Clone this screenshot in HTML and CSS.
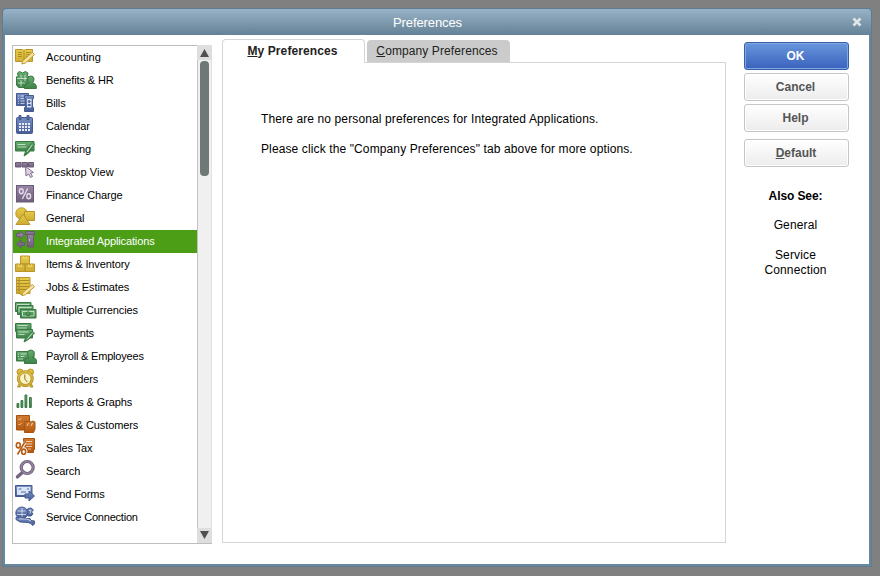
FILE: index.html
```html
<!DOCTYPE html>
<html lang="en">
<head>
<meta charset="utf-8">
<title>Preferences</title>
<link rel="stylesheet" href="styles.css">
</head>
<body>
<svg class="defs" width="0" height="0" aria-hidden="true">
  <defs>
    <linearGradient id="gold" x2="0" y2="1"><stop stop-color="#e6cb4a"/><stop offset="1" stop-color="#cfac30"/></linearGradient>
    <linearGradient id="green" x2="0" y2="1"><stop stop-color="#68ad70"/><stop offset="1" stop-color="#3d8247"/></linearGradient>
    <linearGradient id="blue" x2="0" y2="1"><stop stop-color="#7a90c4"/><stop offset="1" stop-color="#455c96"/></linearGradient>
    <linearGradient id="purple" x2="0" y2="1"><stop stop-color="#9787a5"/><stop offset="1" stop-color="#6f5f7d"/></linearGradient>
    <linearGradient id="orange" x2="0" y2="1"><stop stop-color="#d07a30"/><stop offset="1" stop-color="#b3590f"/></linearGradient>
  </defs>
</svg>
<div class="window">
  <header class="titlebar"><span class="title">Preferences</span>
    <svg class="close" viewBox="0 0 10 10"><path d="M1.500 1.500l7 7M8.500 1.500l-7 7"/></svg>
  </header>
  <main class="content">
    <nav class="sidebar">
      <ul class="list">
        <li><svg class="gold" viewBox="0 0 22 23"><path d="M1.500 3.500h7l1.500 1 1.500-1h7v12h-7l-1.500 1-1.500-1h-7z"/><path class="line" d="M10 5v10M4 6.500h4M4 8.500h4M4 10.500h4M12 6.500h4.500M12 8.500h4.500M12 10.500h3"/><path class="pencil" d="M18.300 6.300l2.200 2.200-9 8.500-3.700 1 .8-3z"/></svg><span class="wide">Accounting</span></li>
        <li><svg class="green" viewBox="0 0 22 23"><path d="M2.500 8l1.500-1.500-.5-2.500 2-1.500 3 1.500 3-1.500 2.500 1.500-.500 2.500 1.500 1.500v10.500H4.500L2.500 16z"/><path class="light" d="M3 9.500h10M7 6v3M7 11v6.500M11 6v6M4 14h7"/><path d="M10.500 19.500v-2.500q0-2 4.500-3-1.500-1.500-1.500-4 0-3 3.200-3t3.300 3q0 2.500-1.500 4 3.800 1 3.800 3v2.500z"/></svg><span>Benefits &amp; HR</span></li>
        <li><svg class="blue" viewBox="0 0 22 23"><path d="M2.500 1.500h12v12h-12z"/><path class="light" d="M4 4h1M6.500 4h6M4 6.500h1M6.500 6.500h4M4 9h1M6.500 9h4M4 11.500h1M6.500 11.500h4"/><path d="M10.500 3.500h9v3h-1v9h1v4h-9v-4h1v-9h-1z"/><path class="inner" d="M13 7h4.500v8.500h-4.500z"/><circle cx="15.200" cy="9.500" r="1"/><path d="M14.200 14v-1.500h2v1.500"/></svg><span>Bills</span></li>
        <li><svg class="blue" viewBox="0 0 22 23"><rect x="2.500" y="2.500" width="16" height="16" rx="1"/><path class="dots" d="M5 9h12M5 12h12M5 15h12"/><path d="M5 .5h2v4h-2zM13 .5h2v4h-2z"/></svg><span>Calendar</span></li>
        <li><svg class="green" viewBox="0 0 22 23"><path d="M1.500 3.500h18.500v9.500h-18.500z"/><path class="light" d="M3.500 6.500h8M3.500 9h9"/><path d="M18.500 4.500l2 1.500-6 9-4.500 3 1.700-5z"/><path class="light" d="M18 7l-5 7"/></svg><span>Checking</span></li>
        <li><svg class="purple" viewBox="0 0 22 23"><path d="M1.500 1.500h5.500v4.500h-5.500zM8 1.500h5.500v4.500h-5.500zM14.500 1.500h5v4.500h-5z"/><path class="cursor" d="M11.500 5.500l8 6-3 .500 2 3.500-2 1-2-3.500-2.500 2z"/></svg><span class="wide">Desktop View</span></li>
        <li><svg class="purple" viewBox="0 0 22 23"><rect x="2.500" y="1.500" width="17" height="16.500"/><g class="light percent"><ellipse cx="7.300" cy="7.300" rx="1.900" ry="2.500"/><ellipse cx="14.700" cy="12.200" rx="1.900" ry="2.500"/><path d="M13.700 4.500L8.300 15"/></g></svg><span>Finance Charge</span></li>
        <li><svg class="gold" viewBox="0 0 22 23"><circle cx="7.500" cy="6.500" r="5.700"/><path d="M10.500 4.500h10v9h-10z"/><path d="M9 7l7 10.500h-14z"/></svg><span>General</span></li>
        <li class="selected"><svg class="purple" viewBox="0 0 22 23"><path d="M2.500 3.500h3.500v-2.500l4.500 4-4.500 4v-2.500h-3.500zM10.500 12.500H7V10l-4.500 4L7 18v-2.500h3.500z"/><path d="M11.500 1.500h9v3h-9z"/><path d="M13.500 4.500h6v12.500h-6z"/><path class="light" d="M15.500 9v2"/></svg><span>Integrated Applications</span></li>
        <li><svg class="gold" viewBox="0 0 22 23"><path d="M6.500 3h9v8h-9zM1.500 11h9.500v7.500h-9.500zM11 11h9.500v7.500h-9.500z"/><path class="shine" d="M9.500 3.500v2h3v-2M4.500 11.500v2h3v-2M14.500 11.500v2h3v-2"/></svg><span>Items &amp; Inventory</span></li>
        <li><svg class="gold" viewBox="0 0 22 23"><path d="M2.500 1.500h13.500v16h-8l-1 1.500-1-1.500h-3.500z"/><path class="line" d="M3 4.500h12.500M3 7.500h12.500M3 10.500h12.500M3 13.500h9M5 2v15"/><path class="pencil" d="M18.300 8.500l2.200 2.200-9 8-3.700 1 .8-3z"/></svg><span>Jobs &amp; Estimates</span></li>
        <li><svg class="green" viewBox="0 0 22 23"><path d="M1.500 3.500h15.500v9h-15.500z"/><path class="light" d="M3 5.500h12.500M3 5.500v5"/><path d="M3.500 6.500h15.500v9h-15.500z"/><path class="light" d="M5 8.500h12.500M5 8.500v5"/><path d="M6.500 10.500h15.500v8.500h-15.500z"/><path class="light" d="M8.500 12.500h11.500v4.500h-11.500z"/><circle cx="14.200" cy="14.800" r="2"/></svg><span>Multiple Currencies</span></li>
        <li><svg class="green" viewBox="0 0 22 23"><path d="M1.500 1.500h15.500v8h-15.500z"/><path class="light" d="M3.500 3.500h10M3.500 6h9"/><path d="M2.500 7.500h16v8.500h-16z"/><path class="light" d="M4.500 10h10M4.500 12.500h6"/><path d="M18.500 9.500l2 1.500-6 6.500-4.500 2.500 1.700-4.500z"/><path class="light" d="M18 11.500l-5 6"/></svg><span>Payments</span></li>
        <li><svg class="green" viewBox="0 0 22 23"><path d="M2.500 6.500h17.500v9.500h-17.500z"/><path class="light" d="M4 9h1M6.500 9h6M4 11.500h1M6.500 11.500h4M4 14h5"/><path d="M10.500 18.500v-3q0-2 4.500-3-1.500-1.500-1.500-4 0-3.500 3.300-3.500t3.300 3.500q0 2.500-1.500 4 3.900 1 3.900 3v3z"/></svg><span class="tight">Payroll &amp; Employees</span></li>
        <li><svg class="gold" viewBox="0 0 22 23"><circle cx="6" cy="4" r="3"/><circle cx="16.500" cy="4" r="3"/><path d="M5 16l-1.500 3h3zM17.500 16l1.500 3h-3z"/><circle cx="11.300" cy="10.700" r="8"/><circle class="face" cx="11.300" cy="10.700" r="5.800"/><path class="hands" d="M10.800 6.500v4.500l2.500 3"/></svg><span>Reminders</span></li>
        <li><svg class="green" viewBox="0 0 22 23"><path d="M3 12.500h1.800v4h-1.800zM7 9.500h1.800v7h-1.800zM11 4h1.800v12.500h-1.800zM15.500 6.500h1.800v10h-1.800z"/></svg><span>Reports &amp; Graphs</span></li>
        <li><svg class="orange" viewBox="0 0 22 23"><path d="M2.500 1.500h13v14.500h-13z"/><path class="light" d="M4.500 5l1 1 2-2M4.500 10l1 1 2-2"/><path d="M11 7l2 1 2-1 2 1 2-1 2 1v7l-1.500 3.500h-9z"/><path class="light" d="M13 12l1.500-3M17 12l1.500-3"/></svg><span>Sales &amp; Customers</span></li>
        <li><svg class="orange" viewBox="0 0 22 23"><path d="M9.500 1.500h11v11h-1v3h-9.500z"/><path class="light" d="M12 4.500h6M12 7h6M12 9.500h6M14 12h3"/><g class="halo"><ellipse cx="4.300" cy="8.300" rx="2" ry="2.600"/><ellipse cx="9.700" cy="14.700" rx="2" ry="2.600"/><path d="M10.500 5.500L3.500 17.500"/></g><g class="tax"><ellipse cx="4.300" cy="8.300" rx="2" ry="2.600"/><ellipse cx="9.700" cy="14.700" rx="2" ry="2.600"/><path d="M10.500 5.500L3.500 17.500"/></g></svg><span>Sales Tax</span></li>
        <li><svg class="search" viewBox="0 0 22 23"><path class="h1" d="M9 12L3.500 16.800"/><circle class="c1" cx="13.200" cy="7.500" r="6"/><circle class="c2" cx="13.200" cy="7.500" r="6"/></svg><span>Search</span></li>
        <li><svg class="blue" viewBox="0 0 22 23"><path d="M1.500 2.500h16.500v11h-16.500z"/><path class="inner" d="M3 4h13.500v8h-13.500z"/><path class="mark" d="M4.500 6h3M7 9h5M13 6h2"/><path d="M11 11h4v-3l5.500 5-5.500 5v-3h-4z"/></svg><span>Send Forms</span></li>
        <li><svg class="blue" viewBox="0 0 22 23"><circle cx="7.800" cy="7" r="6"/><path class="light" d="M3.500 5h8M3 8.500h9M8 2v9"/><path d="M14 2.500l3-.5 2.500 2-2 2 1.500 2-2 2h-3l-1-2 2-1.500-2-2z"/><path d="M2 11.500l5-.5 3 1.500h6l1 2 3.500.5v3l-2 1.500-1.500-2-3-1-8-.5-4-2.500z"/><path class="light" d="M15 4.500h2l-1 3M5 13h8l4 2"/></svg><span class="tight">Service Connection</span></li>
      </ul>
      <div class="scrollbar">
        <div class="arrow"><svg viewBox="0 0 9 8"><path d="M4.500 0L9 8H0z"/></svg></div>
        <div class="track"><div class="thumb"></div></div>
        <div class="arrow down"><svg viewBox="0 0 9 8"><path d="M0 0h9L4.500 8z"/></svg></div>
      </div>
    </nav>
    <section class="panel">
      <div class="tabs">
        <div class="tab active"><span><u>M</u>y Preferences</span></div>
        <div class="tab inactive"><span><u>C</u>ompany Preferences</span></div>
      </div>
      <div class="page">
        <p>There are no personal preferences for Integrated Applications.</p>
        <p>Please click the "Company Preferences" tab above for more options.</p>
      </div>
    </section>
    <aside class="actions">
      <button class="primary">OK</button>
      <button>Cancel</button>
      <button>Help</button>
      <button class="default"><span><u>D</u>efault</span></button>
      <h2>Also See:</h2>
      <p>General</p>
      <p>Service<br>Connection</p>
    </aside>
  </main>
</div>
</body>
</html>
```
FILE: styles.css
```css
* { box-sizing: border-box; }
body {
  margin: 0;
  height: 576px;
  padding: 8px 8px 9px 2px;
  overflow: hidden;
  background: #808080;
  font: 12px/15px "Liberation Sans", Arial, sans-serif;
  color: #000;
}
.defs { display: block; }
.window {
  height: 559px;
  display: flex;
  flex-direction: column;
  background: #6a889c;
  border: solid #5f7d92;
  border-width: 0 1px 1px;
  border-radius: 4px 4px 0 0;
}
.titlebar {
  height: 27px;
  flex: none;
  display: flex;
  align-items: center;
  justify-content: center;
  padding: 0 9px 0 20px;
  background: linear-gradient(#98b3c7, #658196);
  border-top: 1px solid #5e7c91;
  border-radius: 4px 4px 0 0;
  color: #fff;
  font-size: 13px;
}
.title { flex: 1; text-align: center; letter-spacing: -.1px; padding-right: 20px; }
.close { width: 10px; height: 10px; }
.close path { stroke: #e2e5e7; stroke-width: 2.6; }
.content {
  flex: 1;
  margin: 0 2px 2px;
  background: #fff;
  display: flex;
  min-height: 0;
}
.sidebar {
  display: flex;
  width: 200px;
  height: 499px;
  margin: 10px 0 0 7px;
}
.list {
  list-style: none;
  margin: 0;
  padding: 0;
  width: 185px;
  border: 1px solid #bdbdbd;
  border-right: 0;
  font-size: 11px;
  letter-spacing: -.12px;
}
.list li { height: 23px; display: flex; align-items: center; padding-left: 1px; }
.list li span { margin-left: 10px; white-space: nowrap; }
.list .wide { letter-spacing: .05px; }
.list .tight { letter-spacing: -.2px; }
.list svg { width: 22px; height: 23px; flex: none; overflow: visible; }
.selected { background: #4c9e17; color: #fff; }
.gold { fill: url(#gold); stroke: #b8942a; }
.green { fill: url(#green); stroke: #3a7843; }
.blue { fill: url(#blue); stroke: #455b90; }
.purple { fill: url(#purple); stroke: #6a5a77; }
.orange { fill: url(#orange); stroke: #a6530f; }
.list .light, .list .line, .list .shine { fill: none; stroke-width: 1; }
.light { stroke: #ffffffa0; }
.line { stroke: #ae8d28; }
.shine { stroke: #eed770; }
.pencil { fill: #f5e3a0; stroke: #c09a34; }
.cursor { fill: #ded3e6; stroke: #7f6f8d; }
.list .percent { stroke: #e4dcea; stroke-width: 1.4; }
.dots { fill: none; stroke: #e8edf8; stroke-width: 1.8; stroke-dasharray: 2 1; }
.face { fill: #fbf3c5; }
.hands { fill: none; stroke: #8c7028; }
.halo { fill: #fff; stroke: #fff; stroke-width: 3.5; }
.tax { fill: none; stroke: #b65b14; stroke-width: 1.6; }
.search { fill: none; }
.h1 { stroke: #75667f; stroke-width: 3.5; stroke-linecap: round; }
.c1 { stroke: #6f607c; stroke-width: 3.2; }
.c2 { stroke: #9a8ba7; stroke-width: 1.2; }
.inner { fill: #dce5f5; stroke: none; }
.mark { stroke: #5570ab; }
.scrollbar { width: 15px; display: flex; flex-direction: column; border-bottom: 1px solid #bdbdbd; }
.arrow { height: 15px; flex: none; background: #dedede; display: grid; place-items: center; }
.down { padding-bottom: 2px; }
.arrow svg { width: 9px; height: 8px; fill: #505050; display: block; }
.track { flex: 1; background: #f0f0f0; border-left: 1px solid #c2c2c2; border-right: 1px solid #e2e2e2; padding: 1px 2px 0; }
.thumb { width: 9px; height: 115px; border-radius: 4px; background: #707777; }
.panel { width: 504px; height: 504px; margin: 4px 0 0 10px; display: flex; flex-direction: column; }
.tabs { height: 24px; display: flex; z-index: 1; margin-bottom: -1px; }
.tab { text-align: center; white-space: nowrap; color: #222; letter-spacing: .1px; }
.active { width: 143px; background: #fff; border: 1px solid #d5d5d5; border-bottom: 0; border-radius: 4px 4px 0 0; font-weight: bold; padding: 4px 2px 0 0; }
.inactive { width: 143px; height: 22px; margin: 1px 0 0 2px; border-radius: 4px 4px 0 0; background: #cbcbcb; padding: 4px 3px 0 0; }
.page { flex: 1; border: 1px solid #d5d5d5; padding: 49px 0 0 38px; letter-spacing: .118px; }
.page p { margin: 0 0 15px; white-space: nowrap; }
.actions { width: 105px; margin: 7px 0 0 18px; display: flex; flex-direction: column; text-align: center; }
button {
  height: 28px;
  margin: 0 0 3px;
  padding: 0 2px 0 0;
  border: 1px solid #c6c6c6;
  border-radius: 3px;
  background: linear-gradient(#fff, #ececec);
  box-shadow: inset 0 0 0 1px #fff;
  color: #555;
  font: bold 12px "Liberation Sans", Arial, sans-serif;
}
.primary { background: linear-gradient(#6896dc, #3a62bd); border-color: #3b61a5; box-shadow: inset 0 0 0 1px #7fa5e3; color: #fff; }
.default { margin: 4px 0 22px; padding-right: 1px; }
h2 { margin: 0 0 14px; padding-right: 2px; font-size: 12px; line-height: 15px; letter-spacing: -.1px; }
.actions p { margin: 0 0 15px; padding-right: 2px; letter-spacing: .15px; }
```
